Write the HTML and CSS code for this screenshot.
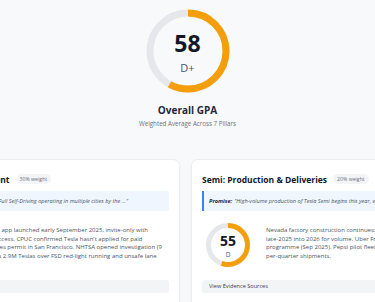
FILE: index.html
```html
<!DOCTYPE html>
<html lang="en">
<head>
    <meta charset="UTF-8">
    <meta name="viewport" content="width=device-width, initial-scale=1.0">
    <title>Tesla Promise Report Card</title>
    <link rel="stylesheet" href="styles.css">
</head>
<body>
    <div class="hero">
        <div class="gauge gauge-lg">
            <svg viewBox="0 0 84 84" width="84" height="84">
                <circle class="gauge-track" cx="42" cy="42" r="38" stroke-width="7"></circle>
                <circle class="gauge-fill" cx="42" cy="42" r="38" stroke-width="7"
                        stroke-dasharray="138.5 238.8" transform="rotate(-90 42 42)"></circle>
            </svg>
            <div class="gauge-label">
                <span class="gauge-score">58</span>
                <span class="gauge-grade">D+</span>
            </div>
        </div>
        <h2 class="hero-title">Overall GPA</h2>
        <p class="hero-sub">Weighted Average Across 7 Pillars</p>
    </div>

    <div class="pillars">
        <div class="pillar-track">
            <!-- FSD / Robotaxi -->
            <div class="pillar">
                <div class="pillar-head">
                    <h3>FSD &amp; Robotaxi Deployment</h3>
                    <span class="weight">30% weight</span>
                </div>
                <div class="promise">
                    <b>Promise:</b> "Paid driverless taxi rides with Full Self-Driving operating in multiple cities by the ..."
                </div>
                <div class="pillar-body">
                    <div class="gauge gauge-sm">
                        <svg viewBox="0 0 44 44" width="44" height="44">
                            <circle class="gauge-track" cx="22" cy="22" r="19.5" stroke-width="5"></circle>
                            <circle class="gauge-fill" cx="22" cy="22" r="19.5" stroke-width="5"
                                    stroke-dasharray="49 122.5" transform="rotate(-90 22 22)"></circle>
                        </svg>
                        <div class="gauge-label">
                            <span class="gauge-score">40</span>
                            <span class="gauge-grade">F</span>
                        </div>
                    </div>
                    <p class="summary">Tesla's Robotaxi app launched early September 2025, invite-only with selected-rider access. CPUC confirmed Tesla hasn't applied for paid driverless vehicles permit in San Francisco. NHTSA opened investigation (9 Oct 2025) across 2.9M Teslas over FSD red-light running and unsafe lane changes.</p>
                </div>
                <div class="evidence">View Evidence Sources</div>
            </div>

            <!-- Semi -->
            <div class="pillar">
                <div class="pillar-head">
                    <h3>Semi: Production &amp; Deliveries</h3>
                    <span class="weight">20% weight</span>
                </div>
                <div class="promise">
                    <b>Promise:</b> "High-volume production of Tesla Semi begins this year, with deliveries to ..."
                </div>
                <div class="pillar-body">
                    <div class="gauge gauge-sm">
                        <svg viewBox="0 0 44 44" width="44" height="44">
                            <circle class="gauge-track" cx="22" cy="22" r="19.5" stroke-width="5"></circle>
                            <circle class="gauge-fill" cx="22" cy="22" r="19.5" stroke-width="5"
                                    stroke-dasharray="67.4 122.5" transform="rotate(-90 22 22)"></circle>
                        </svg>
                        <div class="gauge-label">
                            <span class="gauge-score">55</span>
                            <span class="gauge-grade">D</span>
                        </div>
                    </div>
                    <p class="summary">Nevada factory construction continues; volume production slipped from late-2025 into 2026 for volume. Uber Freight announced a joint pilot programme (Sep 2025). Pepsi pilot fleet still under 100 units, showing no per-quarter shipments.</p>
                </div>
                <div class="evidence">View Evidence Sources</div>
            </div>
        </div>
    </div>
</body>
</html>
```

FILE: styles.css
```css
body {
    margin: 0;
    padding: 0;
    font-family: 'Open Sans', 'Noto Sans', sans-serif;
    background: #f8f9fb;
    color: #111827;
    overflow: hidden;
}

/* Top summary */
.hero {
    display: flex;
    flex-direction: column;
    align-items: center;
    padding-top: 9px;
}

.gauge {
    position: relative;
    display: flex;
    align-items: center;
    justify-content: center;
}

.gauge svg {
    display: block;
}

.gauge-track {
    fill: none;
    stroke: #e5e7eb;
}

.gauge-fill {
    fill: none;
    stroke: #f59e0b;
}

.gauge-label {
    position: absolute;
    inset: 0;
    display: flex;
    flex-direction: column;
    align-items: center;
    justify-content: center;
}

.gauge-score {
    font-weight: 700;
    color: #111827;
}

.gauge-grade {
    color: #4b5563;
}

.gauge-lg .gauge-score {
    font-size: 23px;
    line-height: 26px;
    margin-top: 3px;
}

.gauge-lg .gauge-grade {
    font-size: 11px;
    line-height: 14px;
    margin-top: 5px;
}

.hero-title {
    margin: 11px 0 0;
    font-size: 10px;
    line-height: 13px;
    font-weight: 700;
    color: #1f2937;
}

.hero-sub {
    margin: 2px 0 0;
    font-size: 6.2px;
    line-height: 9px;
    color: #6b7280;
}

/* Pillar cards */
.pillars {
    margin-top: 31px;
}

.pillar-track {
    display: flex;
    gap: 11px;
    margin-left: -120px;
}

.pillar {
    flex: 0 0 300px;
    box-sizing: border-box;
    height: 200px;
    background: #ffffff;
    border: 1px solid #eceef1;
    border-radius: 7px;
    box-shadow: 0 1px 3px rgba(0, 0, 0, 0.05);
    padding: 12px 10px;
}

.pillar-head {
    display: flex;
    align-items: center;
    gap: 6px;
    height: 14px;
}

.pillar-head h3 {
    margin: 0;
    font-size: 8.5px;
    font-weight: 700;
    color: #111827;
    white-space: nowrap;
}

.weight {
    background: #f3f4f6;
    color: #6b7280;
    font-size: 5.2px;
    line-height: 10px;
    padding: 0 4px;
    border-radius: 5px;
    white-space: nowrap;
}

.promise {
    margin-top: 5px;
    height: 20px;
    box-sizing: border-box;
    display: flex;
    align-items: center;
    gap: 2px;
    background: #eff6ff;
    border-left: 2px solid #3b82f6;
    border-radius: 0 3px 3px 0;
    padding: 0 5px;
    font-size: 5.6px;
    font-style: italic;
    color: #4b5563;
    white-space: nowrap;
    overflow: hidden;
}

.promise b {
    color: #1f2937;
}

.pillar-body {
    display: flex;
    align-items: flex-start;
    gap: 16px;
    margin-top: 12px;
    padding-left: 4px;
}

.gauge-sm {
    flex: 0 0 44px;
}

.gauge-sm .gauge-score {
    font-size: 14px;
    line-height: 16px;
    margin-top: 2px;
}

.gauge-sm .gauge-grade {
    font-size: 6.5px;
    line-height: 8px;
    margin-top: 2px;
}

.summary {
    margin: 3px 4px 0 0;
    font-size: 6px;
    line-height: 8.6px;
    color: #4b5563;
    max-height: 34.4px;
    overflow: hidden;
}

.evidence {
    margin-top: 13px;
    background: #f3f4f6;
    border-radius: 3px;
    height: 13px;
    line-height: 13px;
    padding: 0 7px;
    font-size: 5.6px;
    color: #374151;
}
```
